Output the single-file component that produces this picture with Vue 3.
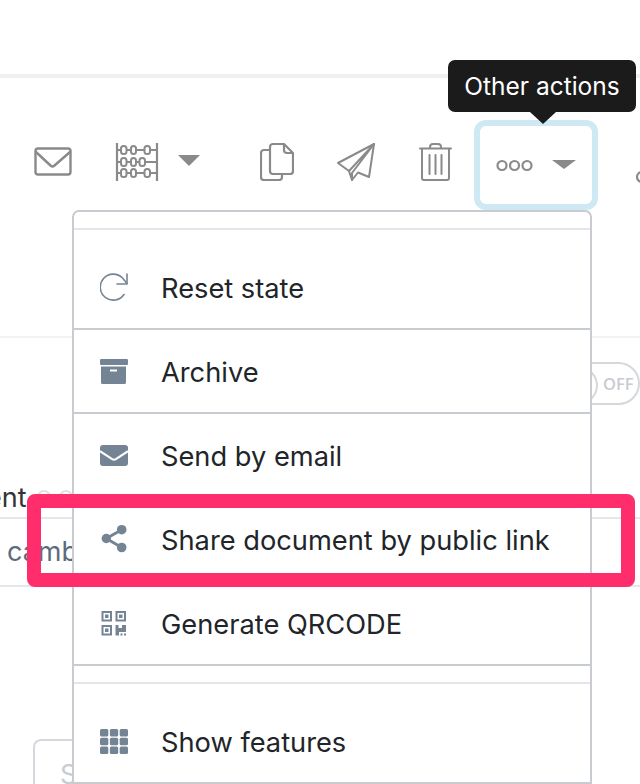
<script setup>
const rows = [
  { key: 'reset', label: 'Reset state' },
  { key: 'archive', label: 'Archive' },
  { key: 'mail', label: 'Send by email' },
  { key: 'share', label: 'Share document by public link' },
  { key: 'qr', label: 'Generate QRCODE' },
]
</script>

<template>
  <div class="page">
    <div class="top-rule"></div>

    <div class="toolbar">
      <svg class="ic mail-o" width="38" height="30" viewBox="0 0 38 30" fill="none" stroke="#8a8a8a" stroke-width="2.4" stroke-linejoin="round" stroke-linecap="round">
        <rect x="1.5" y="1.5" width="35" height="26" rx="2.5" />
        <path d="M2 5l14.500 13.500q2 1.800 4 0L36 5" />
      </svg>
      <svg class="ic abacus" width="44" height="38" viewBox="0 0 44 38" fill="none" stroke="#8a8a8a" stroke-width="2">
        <path d="M2 0v38M42 0v38" stroke-width="2.200" />
        <path d="M2 7h4M11 7h5M21 7h8M35 7h7M2 19h4M11 19h5M21 19h4M30 19h12M2 30h4M11 30h5M21 30h8M35 30h7" />
        <rect x="6" y="3" width="5.500" height="8" rx="2.500" />
        <rect x="16" y="3" width="5" height="8" rx="2.500" />
        <rect x="29.500" y="3" width="5.500" height="8" rx="2.500" />
        <rect x="6" y="15" width="5.500" height="8" rx="2.500" />
        <rect x="16" y="15" width="5" height="8" rx="2.500" />
        <rect x="24.500" y="15" width="5.500" height="8" rx="2.500" />
        <rect x="6" y="26" width="5.500" height="8" rx="2.500" />
        <rect x="16" y="26" width="5" height="8" rx="2.500" />
        <rect x="29.500" y="26" width="5.500" height="8" rx="2.500" />
      </svg>
      <span class="caret caret-a"></span>
      <svg class="ic copy" width="34" height="38" viewBox="0 0 34 38" fill="none" stroke="#8a8a8a" stroke-width="2.200" stroke-linejoin="round">
        <path d="M10 7H4a3 3 0 0 0-3 3v24a3 3 0 0 0 3 3h15a3 3 0 0 0 3-3v-3" />
        <path d="M13 1h11l9 9v18a3 3 0 0 1-3 3H13a3 3 0 0 1-3-3V4a3 3 0 0 1 3-3z" />
        <path d="M24 1v6a3 3 0 0 0 3 3h6" />
      </svg>
      <svg class="ic plane" width="38" height="38" viewBox="0 0 38 38" fill="none" stroke="#8a8a8a" stroke-width="2" stroke-linejoin="round" stroke-linecap="round">
        <path d="M37 1L1 20l11 8 3 9 6-7.500 11 4.500z" />
        <path d="M37 1L12 28M37 1L15 30v7" />
      </svg>
      <svg class="ic trash" width="33" height="38" viewBox="0 0 33 38" fill="none" stroke="#8a8a8a" stroke-width="2" stroke-linejoin="round" stroke-linecap="round">
        <path d="M1 5.500h31M11 5V4q0-3 3-3h5q3 0 3 3v1" />
        <path d="M3 6v29q0 2 2 2h23q2 0 2-2V6" />
        <path d="M10.500 12v19M16.500 12v19M22.500 12v19" />
      </svg>
      <div class="more">
        <svg width="37" height="13" viewBox="0 0 37 13" fill="none" stroke="#8a8a8a" stroke-width="2.200">
          <circle cx="6" cy="6.500" r="4.500" />
          <circle cx="18.500" cy="6.500" r="4.500" />
          <circle cx="31" cy="6.500" r="4.500" />
        </svg>
        <span class="caret caret-b"></span>
      </div>
      <div class="tooltip">Other actions</div>
      <svg class="next-icon" width="4" height="14" viewBox="0 0 4 14"><circle cx="6" cy="7" r="5" fill="none" stroke="#8a8a8a" stroke-width="2.200" /></svg>
    </div>

    <div class="background">
      <div class="rule-a"></div>
      <div class="toggle"><span class="knob"></span><span>OFF</span></div>
      <div class="label-line">
        <span class="label">ent</span>
        <span class="dot"></span>
        <span class="dot"></span>
      </div>
      <div class="field">camb</div>
      <div class="ghost-btn">S</div>
    </div>

    <div class="menu">
      <div class="soft-divider"></div>
      <div v-for="row in rows" :key="row.key" class="row">
        <span class="row-icon">
          <svg v-if="row.key === 'reset'" width="28" height="28" viewBox="0 0 28 28" fill="none" stroke="#758494" stroke-width="1.600" stroke-linecap="round" stroke-linejoin="round">
            <path d="M24 21.500A13 13 0 1 1 22.500 5L27 10.500" />
            <path d="M27 1v10H17" />
          </svg>
          <svg v-else-if="row.key === 'archive'" width="28" height="25" viewBox="0 0 28 25" fill="#758494">
            <rect x="0" y="0" width="28" height="6" rx="1.200" />
            <path d="M1 7.500h25v16q0 1.500-1.500 1.500h-22Q1 25 1 23.500zM10 10.500v2h7v-2z" fill-rule="evenodd" />
          </svg>
          <svg v-else-if="row.key === 'mail'" width="28" height="21" viewBox="0 0 28 21">
            <rect width="28" height="21" rx="3" fill="#758494" />
            <path d="M0 6.200l12.200 8q1.800 1.100 3.600 0l12.200-8" fill="none" stroke="#fff" stroke-width="2" />
          </svg>
          <svg v-else-if="row.key === 'share'" width="28" height="30" viewBox="0 0 28 30" fill="#758494">
            <path d="M6.300 14.500L21.700 5.700M6.300 14.500l15.400 9" stroke="#758494" stroke-width="3" />
            <circle cx="6.300" cy="14.500" r="4.700" />
            <circle cx="21.700" cy="5.700" r="4.800" />
            <circle cx="21.700" cy="23.500" r="4.800" />
          </svg>
          <svg v-else width="28" height="25" viewBox="-1.500 0 28 25" fill="none">
            <g stroke="#758494" stroke-width="2">
              <rect x="1" y="1" width="8.500" height="8.500" />
              <rect x="15" y="1" width="8.500" height="8.500" />
              <rect x="1" y="15" width="8.500" height="8.500" />
            </g>
            <g fill="#758494">
              <rect x="3.500" y="3.500" width="3.500" height="3.500" />
              <rect x="17.500" y="3.500" width="3.500" height="3.500" />
              <rect x="3.500" y="17.500" width="3.500" height="3.500" />
              <path d="M14 14h3v3h3.500v-3h4v7H17.500v3.500H14z" />
              <rect x="19" y="22.500" width="2" height="2" />
              <rect x="22.500" y="22.500" width="2" height="2" />
            </g>
          </svg>
        </span>
        <span class="row-text">{{ row.label }}</span>
      </div>
      <div class="soft-divider"></div>
      <div class="row">
        <span class="row-icon">
          <svg width="28" height="25" viewBox="0 0 28 25" fill="#758494">
            <rect x="0" y="0" width="8.300" height="7.400" rx="1.500" />
            <rect x="9.900" y="0" width="8.300" height="7.400" rx="1.500" />
            <rect x="19.700" y="0" width="8.300" height="7.400" rx="1.500" />
            <rect x="0" y="8.800" width="8.300" height="7.400" rx="1.500" />
            <rect x="9.900" y="8.800" width="8.300" height="7.400" rx="1.500" />
            <rect x="19.700" y="8.800" width="8.300" height="7.400" rx="1.500" />
            <rect x="0" y="17.600" width="8.300" height="7.400" rx="1.500" />
            <rect x="9.900" y="17.600" width="8.300" height="7.400" rx="1.500" />
            <rect x="19.700" y="17.600" width="8.300" height="7.400" rx="1.500" />
          </svg>
        </span>
        <span class="row-text">Show features</span>
      </div>
    </div>

    <div class="highlight"></div>
  </div>
</template>

<style scoped>
.page {
  position: relative;
  width: 640px;
  height: 784px;
  overflow: hidden;
  background: #fff;
  font-family: Inter, "Liberation Sans", sans-serif;
  padding-top: 74px;
  box-sizing: border-box;
}
.top-rule {
  height: 4px;
  background: #f0f0f0;
}
.toolbar {
  position: relative;
  display: flex;
  align-items: center;
  height: 90px;
  margin-top: 42px;
  padding-left: 34px;
}
.ic { flex: none; display: block; margin-bottom: 6px; }
.abacus { margin-left: 43px; }
.plane { margin-left: 43px; }
.trash { margin-left: 44px; }
.caret {
  flex: none;
  width: 0;
  height: 0;
  border-style: solid;
  border-color: #8a8a8a transparent transparent;
}
.caret-a {
  border-width: 11px 11px 0;
  margin-left: 19px;
  margin-right: 60px;
  margin-top: -9px;
}
.caret-b {
  border-width: 9px 12px 0;
  margin-left: 19px;
  margin-top: -1px;
}
.more {
  position: relative;
  flex: none;
  display: flex;
  align-items: center;
  width: 124px;
  height: 90px;
  margin-left: 22px;
  padding-left: 16px;
  box-sizing: border-box;
  border: 6px solid #cfe9f4;
  border-radius: 12px;
}
.tooltip {
  position: absolute;
  left: 448px;
  top: -60px;
  width: 188px;
  height: 52px;
  background: #1b1b1b;
  color: #fff;
  border-radius: 7px;
  font-size: 24.500px;
  line-height: 52px;
  text-align: center;
}
.tooltip::after {
  content: "";
  position: absolute;
  left: 82px;
  top: 52px;
  border-style: solid;
  border-width: 12px 13px 0;
  border-color: #1b1b1b transparent transparent;
}
.next-icon {
  position: absolute;
  left: 636px;
  top: 50px;
}
.background { position: relative; }
.rule-a {
  height: 2px;
  margin-top: 126px;
  background: #f3f3f3;
}
.toggle {
  position: relative;
  display: flex;
  align-items: center;
  width: 96px;
  height: 43px;
  margin: 24px 0 0 544px;
  box-sizing: border-box;
  border: 2px solid #d5d8dc;
  border-radius: 22px;
  color: #c8ccd0;
  font-family: "Open Sans", sans-serif;
  font-weight: 600;
  font-size: 16.500px;
  padding-left: 57px;
}
.knob {
  position: absolute;
  left: 12px;
  top: 2px;
  width: 36px;
  height: 35px;
  border: 2px solid #d5d8dc;
  border-radius: 50%;
}
.label-line {
  display: flex;
  align-items: center;
  height: 40px;
  margin-top: 72px;
  margin-left: -14px;
  font-size: 27px;
  color: #333;
}
.label { width: 51px; flex: none; }
.dot {
  flex: none;
  width: 14px;
  height: 14px;
  border: 2px solid #e0e0e0;
  border-radius: 50%;
  margin-right: 8px;
  box-sizing: border-box;
}
.field {
  height: 66px;
  border-top: 2px solid #e5e7ea;
  border-bottom: 2px solid #e5e7ea;
  padding-left: 7px;
  font-size: 27px;
  line-height: 66px;
  color: #5c6c7c;
}
.ghost-btn {
  width: 200px;
  height: 60px;
  margin: 152px 0 0 33px;
  box-sizing: border-box;
  border: 2px solid #d5d8dc;
  border-radius: 8px;
  padding: 17px 0 0 25px;
  font-size: 27px;
  color: #c8ccd0;
}
.menu {
  position: absolute;
  left: 72px;
  top: 210px;
  width: 520px;
  box-sizing: border-box;
  background: #fff;
  border: 2px solid #c8ccd0;
  border-bottom: none;
  border-radius: 7px 7px 0 0;
}
.soft-divider {
  height: 2px;
  margin: 16px 0;
  background: #e3e5e8;
}
.row {
  display: flex;
  align-items: center;
  height: 82px;
  border-bottom: 2px solid #c8ccd0;
}
.row-icon {
  flex: none;
  width: 87px;
  padding-left: 26px;
  box-sizing: border-box;
  display: flex;
}
.row-text {
  padding-top: 2px;
  font-size: 27.250px;
  color: #212529;
  white-space: nowrap;
}
.highlight {
  position: absolute;
  left: 27px;
  top: 494px;
  width: 608px;
  height: 93px;
  box-sizing: border-box;
  border: 14px solid #ff2d6b;
  border-radius: 8px;
}
</style>
